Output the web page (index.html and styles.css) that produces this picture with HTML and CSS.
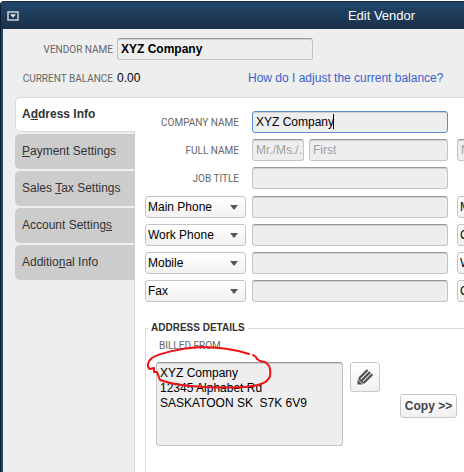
FILE: index.html
```
<!DOCTYPE html>
<html lang="en">

<head>
    <meta charset="UTF-8">
    <meta name="viewport" content="width=device-width, initial-scale=1.0">
    <title>Edit Vendor</title>
    <link rel="stylesheet" href="styles.css">
</head>

<body>
    <div class="window">
        <header class="titlebar">
            <button class="window-menu" type="button" aria-label="Window menu">
                <svg width="12" height="10" viewBox="0 0 12 10">
                    <rect x="1" y="1" width="10" height="8" fill="none" stroke="#c3c9cf" stroke-width="1.6" />
                    <path d="M3 3.2h6L6 6.8z" fill="#e4e8ec" />
                </svg>
            </button>
            <h1>Edit Vendor</h1>
        </header>

        <div class="summary">
            <label class="caption" for="vendorName">VENDOR NAME</label>
            <input class="field vendor-name" type="text" id="vendorName" value="XYZ Company">
            <span class="caption">CURRENT BALANCE</span>
            <div class="balance">
                <span class="amount">0.00</span>
                <a href="#">How do I adjust the current balance?</a>
            </div>
        </div>

        <div class="content">
            <nav class="tabs">
                <a class="tab active" href="#">A<u>d</u>dress Info</a>
                <a class="tab" href="#"><u>P</u>ayment Settings</a>
                <a class="tab" href="#">Sales <u>T</u>ax Settings</a>
                <a class="tab" href="#">Account Setting<u>s</u></a>
                <a class="tab" href="#">Additio<u>n</u>al Info</a>
            </nav>

            <main class="panel">
                <form>
                    <div class="rows">
                        <label class="caption" for="company">COMPANY NAME</label>
                        <div class="focused"><input class="field" type="text" id="company" value="XYZ Company"></div>
                        <span></span>

                        <label class="caption" for="firstName">FULL NAME</label>
                        <div class="name">
                            <input class="field salutation" type="text" placeholder="Mr./Ms./.." aria-label="Salutation">
                            <input class="field" type="text" id="firstName" placeholder="First">
                        </div>
                        <input class="field" type="text" placeholder="M.I." aria-label="Middle initial">

                        <label class="caption" for="jobTitle">JOB TITLE</label>
                        <input class="field" type="text" id="jobTitle">
                        <span></span>
                    </div>

                    <div class="rows contacts">
                        <div class="dropdown"><select aria-label="Contact type 1"><option>Main Phone</option></select></div>
                        <input class="field" type="text" aria-label="Main phone">
                        <div class="dropdown"><select aria-label="Contact type 5"><option>Main Email</option></select></div>

                        <div class="dropdown"><select aria-label="Contact type 2"><option>Work Phone</option></select></div>
                        <input class="field" type="text" aria-label="Work phone">
                        <div class="dropdown"><select aria-label="Contact type 6"><option>CC Email</option></select></div>

                        <div class="dropdown"><select aria-label="Contact type 3"><option>Mobile</option></select></div>
                        <input class="field" type="text" aria-label="Mobile">
                        <div class="dropdown"><select aria-label="Contact type 7"><option>Website</option></select></div>

                        <div class="dropdown"><select aria-label="Contact type 4"><option>Fax</option></select></div>
                        <input class="field" type="text" aria-label="Fax">
                        <div class="dropdown"><select aria-label="Contact type 8"><option>Other 1</option></select></div>
                    </div>

                    <fieldset>
                        <legend>ADDRESS DETAILS</legend>
                        <label class="billed-label" for="billedFrom">BILLED FROM</label>
                        <div class="address">
                            <textarea class="field" id="billedFrom">XYZ Company
12345 Alphabet Rd
SASKATOON SK  S7K 6V9</textarea>
                            <button class="button edit" type="button" aria-label="Edit address">
                                <svg width="16" height="16" viewBox="0 0 16 16">
                                    <path d="M.5 15.5V10.5L5.5 15.5z" fill="#505050" />
                                    <path d="M2 9.5L10.5 1M4.3 11.8L13 3.1M6.6 14L15.3 5.4" fill="none" stroke="#505050" stroke-width="2.2" />
                                    <path d="M1.6 9.6L6.5 14.4" stroke="#505050" stroke-width="1.6" />
                                </svg>
                            </button>
                            <button class="button copy" type="button">Copy &gt;&gt;</button>
                            <!-- hand-drawn ring round the first address line -->
                            <svg class="ring" width="126" height="46" viewBox="147 344 126 46">
                                <path d="M249 354C237 350 219 347 200 347C179 348 158 354 152 358C147 362 147 368 150 369L154 368L154 372L157 372L160 380C171 384 184 386 204 387C226 388 246 388 258 385C266 383 269 380 270 376C271 370 270 365 265 362L260 361L257 359L256 357L253 355" />
                            </svg>
                        </div>
                    </fieldset>
                </form>
            </main>
        </div>
    </div>
</body>

</html>
```
FILE: styles.css
```
* {
    box-sizing: border-box;
}

body {
    margin: 0;
    padding-top: 1px;
    overflow: hidden;
    background-color: #ffffff;
    font-family: "Liberation Sans", Arial, sans-serif;
    font-size: 12px;
    color: #000000;
}

input,
select,
textarea,
button {
    font: inherit;
    color: inherit;
    margin: 0;
}

/* the dialog keeps its width and is cut off on small screens */
.window {
    display: flex;
    flex-direction: column;
    min-width: 762px;
    min-height: calc(100vh - 1px);
    padding-left: 2px;
    border-left: 1px solid #0b1c30;
    border-top-left-radius: 4px;
    background-color: #eeeeee;
    box-shadow: inset 2px 0 #1f4466;
}

.titlebar {
    display: flex;
    align-items: center;
    height: 28px;
    margin-left: -2px;
    padding: 0 6px;
    border-top: 1px solid #12283d;
    border-top-left-radius: 4px;
    background: linear-gradient(#23476a, #1a3048);
}

.titlebar h1 {
    flex: 1;
    margin: 0 12px 0 0;
    font-size: 13px;
    font-weight: normal;
    text-align: center;
    color: #ffffff;
}

.window-menu {
    display: flex;
    width: 12px;
    padding: 0;
    border: 0;
    background: none;
}

.caption,
.billed-label {
    font-family: Roboto, Arial, sans-serif;
    font-size: 10px;
    color: #666666;
}

.caption {
    text-align: right;
    white-space: nowrap;
}

.summary {
    display: grid;
    grid-template-columns: 98px 1fr;
    grid-auto-rows: 22px;
    align-items: center;
    gap: 7px 4px;
    padding: 9px 12px 8px;
}

.field {
    display: block;
    width: 100%;
    height: 22px;
    min-width: 0;
    padding: 0 3px;
    border: 1px solid #c4c4c4;
    border-top-color: #999999;
    border-radius: 3px;
    outline: none;
    background-color: #eeeeee;
    box-shadow: inset 0 1px #d0d0d0;
}

.field::placeholder {
    color: #a0a0a0;
}

.vendor-name {
    width: 196px;
    font-weight: bold;
}

.balance {
    display: flex;
}

.amount {
    width: 131px;
}

.balance a {
    color: #3a5fcd;
    text-decoration: none;
}

.content {
    display: flex;
    flex: 1;
    padding-left: 12px;
}

.tabs {
    display: flex;
    flex-direction: column;
    gap: 2px;
    width: 120px;
}

.tab {
    z-index: 1;
    height: 35px;
    padding-left: 7px;
    border-radius: 5px 0 0 5px;
    background-color: #cccccc;
    line-height: 34px;
    color: #333333;
    text-decoration: none;
}

.tab.active {
    border: 1px solid #dadada;
    border-right: 0;
    padding-left: 6px;
    background-color: #ffffff;
    line-height: 32px;
    font-weight: bold;
}

.panel {
    flex: 1;
    margin-left: -1px;
    padding: 13px 10px 0;
    border-top: 1px solid #dadada;
    border-left: 1px solid #dadada;
    background-color: #ffffff;
}

.rows {
    display: grid;
    grid-template-columns: 101px 196px 101px;
    grid-auto-rows: 22px;
    align-items: center;
    gap: 6px;
}

.rows > :nth-child(3n) {
    margin-left: 3px;
}

.rows .caption {
    padding-right: 7px;
}

.contacts {
    margin-top: 7px;
}

.focused {
    display: flex;
    position: relative;
}

.focused .field {
    border-color: #5b8bd4;
}

/* text cursor */
.focused::after {
    content: "";
    position: absolute;
    left: 81px;
    top: 3px;
    width: 1px;
    height: 15px;
    background-color: #000000;
}

.name {
    display: flex;
    gap: 5px;
}

.name .salutation {
    flex: 0 0 52px;
    padding-right: 0;
}

.dropdown {
    position: relative;
}

.dropdown select {
    display: block;
    width: 100%;
    height: 22px;
    padding: 0 2px;
    border: 1px solid #c4c4c4;
    border-radius: 3px;
    appearance: none;
    background: linear-gradient(#ffffff, #f1f1f1);
}

.dropdown::after {
    content: "";
    position: absolute;
    right: 8px;
    top: 9px;
    border: 4px solid transparent;
    border-top: 5px solid #555555;
    border-bottom: 0;
    pointer-events: none;
}

fieldset {
    min-height: 150px;
    margin: 20px 0 0;
    padding: 6px 10px 0;
    border: 1px solid #dadada;
    border-bottom: 0;
}

legend {
    margin-left: -8px;
    padding: 0 3px;
    font-size: 10px;
    line-height: 12px;
    font-weight: bold;
    color: #333333;
}

.billed-label {
    display: block;
    padding-left: 3px;
    line-height: 12px;
}

.address {
    display: flex;
    position: relative;
    align-items: flex-start;
    margin-top: 10px;
}

.address textarea {
    width: 187px;
    height: 84px;
    padding: 3px;
    line-height: 15px;
    white-space: pre;
    overflow: hidden;
    resize: none;
}

.button {
    display: flex;
    align-items: center;
    justify-content: center;
    border: 1px solid #c8c8c8;
    border-radius: 3px;
    padding: 0;
    background: linear-gradient(#ffffff, #f0f0f0);
}

.edit {
    width: 30px;
    height: 30px;
    margin-left: 7px;
}

.copy {
    width: 57px;
    height: 24px;
    margin: 32px 0 0 20px;
    font-weight: bold;
    color: #444444;
}

.ring {
    position: absolute;
    left: -9px;
    top: -18px;
    pointer-events: none;
}

.ring path {
    fill: none;
    stroke: #ee1111;
    stroke-width: 2;
    stroke-linecap: round;
    stroke-linejoin: round;
}
```
